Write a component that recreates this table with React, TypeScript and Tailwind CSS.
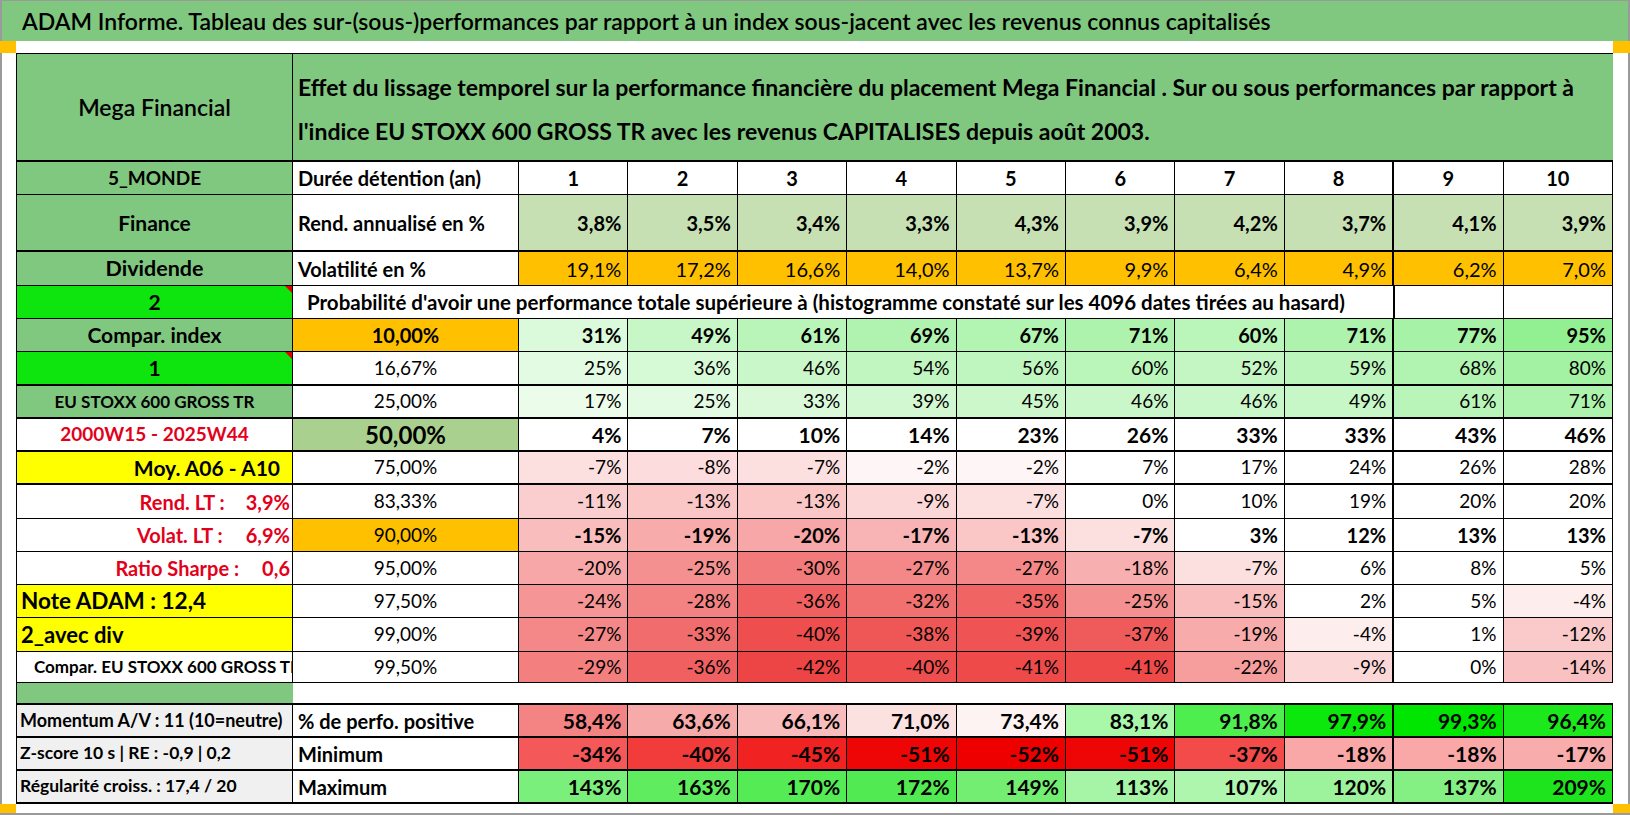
import React from "react";

type Tone = "up" | "down" | "none";
type RGB = [number, number, number];

type PctRow = {
  label: string;
  value?: string;
  gap?: string;
  labelCls: string;
  flag?: boolean;
  pct: string;
  pctCls: string;
  vals: number[];
  tone: Tone;
  valCls: string;
  rowCls: string;
};

type BottomRow = {
  label: string;
  labelCls: string;
  name: string;
  vals: number[];
  fmt: (v: number) => string;
  color: (v: number) => string;
};

const COLS = "grid grid-cols-[276px_226px_repeat(10,minmax(0,1fr))]";

function mix(c: RGB, t: number) {
  const k = Math.max(0, Math.min(1, t));
  const ch = (v: number) => Math.round(255 + (v - 255) * k);
  return `rgb(${ch(c[0])}, ${ch(c[1])}, ${ch(c[2])})`;
}

function bandColor(v: number, tone: Tone) {
  if (tone === "up") return mix([140, 238, 140], v / 100);
  if (tone === "down") return v < 0 ? mix([236, 56, 56], -v / 45) : "#ffffff";
  return "#ffffff";
}

const comma = (v: number) => v.toFixed(1).replace(".", ",") + "%";

const pctRows: PctRow[] = [
  {
    label: "Compar. index",
    labelCls: "justify-center bg-[#80c880] text-[21px] font-bold",
    pct: "10,00%",
    pctCls: "justify-center bg-[#ffc000] text-[20px] font-bold",
    vals: [31, 49, 61, 69, 67, 71, 60, 71, 77, 95],
    tone: "up",
    valCls: "text-[20px] font-bold",
    rowCls: "h-[33px] border-b border-black",
  },
  {
    label: "1",
    labelCls: "justify-center bg-[#0ee40e] text-[21px] font-bold",
    flag: true,
    pct: "16,67%",
    pctCls: "justify-center bg-white text-[19px]",
    vals: [25, 36, 46, 54, 56, 60, 52, 59, 68, 80],
    tone: "up",
    valCls: "text-[19px]",
    rowCls: "h-[34px] border-b-2 border-black",
  },
  {
    label: "EU STOXX 600 GROSS TR",
    labelCls: "justify-center bg-[#80c880] text-[17px] font-bold",
    pct: "25,00%",
    pctCls: "justify-center bg-white text-[19px]",
    vals: [17, 25, 33, 39, 45, 46, 46, 49, 61, 71],
    tone: "up",
    valCls: "text-[19px]",
    rowCls: "h-[33px] border-b-2 border-black",
  },
  {
    label: "2000W15 - 2025W44",
    labelCls: "justify-center bg-white text-[19px] font-bold text-[#e3001b]",
    pct: "50,00%",
    pctCls: "justify-center bg-[#a9d08e] text-[24px] font-bold",
    vals: [4, 7, 10, 14, 23, 26, 33, 33, 43, 46],
    tone: "none",
    valCls: "text-[21px] font-bold",
    rowCls: "h-[33px] border-b-2 border-black",
  },
  {
    label: "Moy. A06 - A10",
    labelCls: "justify-end pr-[12px] bg-[#ffff00] text-[21px] font-bold",
    pct: "75,00%",
    pctCls: "justify-center bg-white text-[19px]",
    vals: [-7, -8, -7, -2, -2, 7, 17, 24, 26, 28],
    tone: "down",
    valCls: "text-[19px]",
    rowCls: "h-[33px] border-b-2 border-black",
  },
  {
    label: "Rend. LT :",
    value: "3,9%",
    gap: "ml-[21px]",
    labelCls: "justify-end pr-[2px] bg-white text-[20px] font-bold text-[#e3001b]",
    pct: "83,33%",
    pctCls: "justify-center bg-white text-[19px]",
    vals: [-11, -13, -13, -9, -7, 0, 10, 19, 20, 20],
    tone: "down",
    valCls: "text-[19px]",
    rowCls: "h-[34px] border-b border-black",
  },
  {
    label: "Volat. LT :",
    value: "6,9%",
    gap: "ml-[23px]",
    labelCls: "justify-end pr-[2px] bg-white text-[20px] font-bold text-[#e3001b]",
    pct: "90,00%",
    pctCls: "justify-center bg-[#ffc000] text-[19px]",
    vals: [-15, -19, -20, -17, -13, -7, 3, 12, 13, 13],
    tone: "down",
    valCls: "text-[20px] font-bold",
    rowCls: "h-[33px] border-b border-black",
  },
  {
    label: "Ratio Sharpe :",
    value: "0,6",
    gap: "ml-[23px]",
    labelCls: "justify-end pr-[2px] bg-white text-[20px] font-bold text-[#e3001b]",
    pct: "95,00%",
    pctCls: "justify-center bg-white text-[19px]",
    vals: [-20, -25, -30, -27, -27, -18, -7, 6, 8, 5],
    tone: "down",
    valCls: "text-[19px]",
    rowCls: "h-[33px] border-b border-black",
  },
  {
    label: "Note ADAM : 12,4",
    labelCls: "justify-start pl-[4px] bg-[#ffff00] text-[22.5px] font-bold",
    pct: "97,50%",
    pctCls: "justify-center bg-white text-[19px]",
    vals: [-24, -28, -36, -32, -35, -25, -15, 2, 5, -4],
    tone: "down",
    valCls: "text-[19px]",
    rowCls: "h-[33px] border-b border-black",
  },
  {
    label: "2_avec div",
    labelCls: "justify-start pl-[4px] bg-[#ffff00] text-[22px] font-bold",
    pct: "99,00%",
    pctCls: "justify-center bg-white text-[19px]",
    vals: [-27, -33, -40, -38, -39, -37, -19, -4, 1, -12],
    tone: "down",
    valCls: "text-[19px]",
    rowCls: "h-[34px] border-b border-black",
  },
  {
    label: "Compar. EU STOXX 600 GROSS TR",
    labelCls: "justify-start pl-[17px] bg-white text-[17px] font-bold",
    pct: "99,50%",
    pctCls: "justify-center bg-white text-[19px]",
    vals: [-29, -36, -42, -40, -41, -41, -22, -9, 0, -14],
    tone: "down",
    valCls: "text-[19px]",
    rowCls: "h-[31px] border-b border-black",
  },
];

const bottomRows: BottomRow[] = [
  {
    label: "Momentum A/V : 11 (10=neutre)",
    labelCls: "text-[18px]",
    name: "% de perfo. positive",
    vals: [58.4, 63.6, 66.1, 71.0, 73.4, 83.1, 91.8, 97.9, 99.3, 96.4],
    fmt: comma,
    color: (v) => (v < 75 ? mix([240, 90, 90], (75 - v) / 22) : mix([0, 230, 0], (v - 75) / 24)),
  },
  {
    label: "Z-score 10 s | RE : -0,9 | 0,2",
    labelCls: "text-[17.5px]",
    name: "Minimum",
    vals: [-34, -40, -45, -51, -52, -51, -37, -18, -18, -17],
    fmt: (v) => `${v}%`,
    color: (v) => mix([238, 0, 0], -v / 52),
  },
  {
    label: "Régularité croiss. : 17,4 / 20",
    labelCls: "text-[17.5px]",
    name: "Maximum",
    vals: [143, 163, 170, 172, 149, 113, 107, 120, 137, 209],
    fmt: (v) => `${v}%`,
    color: (v) => mix([30, 228, 30], (v - 50) / 159),
  },
];

function Flag() {
  return (
    <span className="absolute right-0 top-0 h-0 w-0 border-l-[7px] border-t-[7px] border-l-transparent border-t-[#e00000]" />
  );
}

function Cell({
  className = "",
  style,
  children,
}: {
  className?: string;
  style?: React.CSSProperties;
  children?: React.ReactNode;
}) {
  return (
    <div
      style={style}
      className={`relative flex min-w-0 items-center overflow-hidden whitespace-pre border-r border-black ${className}`}
    >
      {children}
    </div>
  );
}

function valueBorder(i: number) {
  return i === 7 ? "border-r-2" : "";
}

export default function App() {
  return (
    <div className="h-[815px] w-[1630px] overflow-hidden bg-white text-black [font-family:Lato,'Noto_Sans',sans-serif]">
      {/* Title bar */}
      <div className="flex h-[41px] items-center border-l-2 border-r-2 border-t border-[#9a9a9a] bg-[#80c880] pl-[20px] text-[23px] font-semibold">
        ADAM Informe. Tableau des sur-(sous-)performances par rapport à un index sous-jacent avec les revenus connus capitalisés
      </div>

      {/* Selection handles strip */}
      <div className="flex h-[12px] justify-between">
        <div className="w-[16px] bg-[#ffc000]" />
        <div className="w-[17px] bg-[#ffc000]" />
      </div>

      <div className="flex h-[751px]">
        <div className="w-[16px] border-l-2 border-[#9a9a9a]" />

        <div className="w-[1597px] border-l border-t border-black">
          {/* Header */}
          <div className="grid h-[108px] grid-cols-[276px_1fr] border-b-2 border-black bg-[#80c880]">
            <div className="flex items-center justify-center border-r border-black text-[23px] font-semibold">
              Mega Financial
            </div>
            <div className="flex flex-col justify-center pl-[5px] pt-[3px] text-[23px] font-bold leading-[44px]">
              <div>
                Effet du lissage temporel sur la performance financière du placement Mega Financial . Sur ou sous performances par rapport à
              </div>
              <div>l'indice EU STOXX 600 GROSS TR avec les revenus CAPITALISES depuis août 2003.</div>
            </div>
          </div>

          {/* Durée */}
          <div className={`${COLS} h-[33px] border-b border-black`}>
            <Cell className="justify-center bg-[#80c880] text-[19px] font-bold">5_MONDE</Cell>
            <Cell className="bg-white pl-[5px] text-[20px] font-bold">Durée détention (an)</Cell>
            {[1, 2, 3, 4, 5, 6, 7, 8, 9, 10].map((n, i) => (
              <Cell key={n} className={`justify-center bg-white text-[20px] font-bold ${valueBorder(i)}`}>
                {n}
              </Cell>
            ))}
          </div>

          {/* Rendement */}
          <div className={`${COLS} h-[57px] border-b-2 border-black`}>
            <Cell className="justify-center bg-[#80c880] text-[21px] font-bold">Finance</Cell>
            <Cell className="bg-white pl-[5px] text-[20px] font-bold">Rend. annualisé en %</Cell>
            {[3.8, 3.5, 3.4, 3.3, 4.3, 3.9, 4.2, 3.7, 4.1, 3.9].map((v, i) => (
              <Cell key={i} className={`justify-end bg-[#c6e0b4] pr-[6px] text-[20px] font-bold ${valueBorder(i)}`}>
                {comma(v)}
              </Cell>
            ))}
          </div>

          {/* Volatilité */}
          <div className={`${COLS} h-[34px] border-b border-black`}>
            <Cell className="justify-center bg-[#80c880] text-[21.5px] font-bold">Dividende</Cell>
            <Cell className="bg-white pl-[5px] text-[20px] font-bold">Volatilité en %</Cell>
            {[19.1, 17.2, 16.6, 14.0, 13.7, 9.9, 6.4, 4.9, 6.2, 7.0].map((v, i) => (
              <Cell key={i} className={`justify-end bg-[#ffc000] pr-[6px] text-[20px] ${valueBorder(i)}`}>
                {comma(v)}
              </Cell>
            ))}
          </div>

          {/* Probabilité */}
          <div className="grid h-[33px] grid-cols-[276px_repeat(9,minmax(0,1fr))_109px_109px] border-b border-black">
            <Cell className="justify-center bg-[#0ee40e] text-[21px] font-bold">
              2
              <Flag />
            </Cell>
            <Cell className="col-span-9 border-r-2 bg-white pl-[14px] text-[20.5px] font-bold">
              Probabilité d'avoir une performance totale supérieure à (histogramme constaté sur les 4096 dates tirées au hasard)
            </Cell>
            <Cell className="bg-white" />
            <Cell className="bg-white" />
          </div>

          {pctRows.map((row) => (
            <div key={row.label} className={`${COLS} ${row.rowCls}`}>
              <Cell className={row.labelCls}>
                <span>{row.label}</span>
                {row.value && <span className={row.gap}>{row.value}</span>}
                {row.flag && <Flag />}
              </Cell>
              <Cell className={row.pctCls}>{row.pct}</Cell>
              {row.vals.map((v, i) => (
                <Cell
                  key={i}
                  style={{ backgroundColor: bandColor(v, row.tone) }}
                  className={`justify-end pr-[6px] ${row.valCls} ${valueBorder(i)}`}
                >
                  {v}%
                </Cell>
              ))}
            </div>
          ))}

          {/* Spacer row */}
          <div className={`${COLS} h-[20px]`}>
            <div className="bg-[#80c880]" />
          </div>

          {/* Summary block */}
          <div className="border-t-2 border-black">
            {bottomRows.map((row) => (
              <div key={row.name} className={`${COLS} h-[33px] border-b-2 border-black`}>
                <Cell className={`bg-[#f0f0f0] pl-[3px] font-bold ${row.labelCls}`}>{row.label}</Cell>
                <Cell className="bg-white pl-[5px] text-[20px] font-bold">{row.name}</Cell>
                {row.vals.map((v, i) => (
                  <Cell
                    key={i}
                    style={{ backgroundColor: row.color(v) }}
                    className={`justify-end pr-[6px] text-[21px] font-bold ${valueBorder(i)}`}
                  >
                    {row.fmt(v)}
                  </Cell>
                ))}
              </div>
            ))}
          </div>
        </div>

        <div className="w-[17px] border-r-2 border-[#9a9a9a]" />
      </div>

      <div className="flex h-[11px] justify-between border-b-2 border-l-2 border-r-2 border-[#9a9a9a]">
        <div className="-ml-[2px] w-[16px] bg-[#ffc000]" />
        <div className="-mr-[2px] w-[17px] bg-[#ffc000]" />
      </div>
    </div>
  );
}
